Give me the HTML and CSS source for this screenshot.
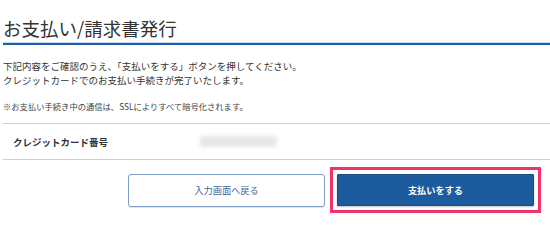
FILE: index.html
```html
<!DOCTYPE html>
<html lang="ja">
<head>
<meta charset="utf-8">
<title>お支払い/請求書発行</title>
<link rel="stylesheet" href="styles.css">
</head>
<body>
<div class="page">
  <h1 class="title">お支払い/請求書発行</h1>
  <p class="intro">下記内容をご確認のうえ、「支払いをする」ボタンを押してください。<br>クレジットカードでのお支払い手続きが完了いたします。</p>
  <p class="note">※お支払い手続き中の通信は、SSLによりすべて暗号化されます。</p>
  <div class="row">
    <div class="label">クレジットカード番号</div>
    <div class="value"><span class="blur"></span></div>
  </div>
  <div class="actions">
    <button class="btn btn-back" type="button">入力画面へ戻る</button>
    <div class="highlight">
      <button class="btn btn-pay" type="button">支払いをする</button>
    </div>
  </div>
</div>
</body>
</html>
```

FILE: styles.css
```css
html, body {
  margin: 0;
  padding: 0;
  background: #ffffff;
}

body {
  font-family: "Noto Sans CJK JP", "Noto Sans", sans-serif;
  color: #333333;
}

.page {
  margin-left: 3px;
  width: 547px;
}

.title {
  margin: 0;
  padding: 16px 0 3px 0;
  font-size: 18.5px;
  line-height: 24px;
  font-weight: 400;
  color: #333333;
  border-bottom: 2px solid #1f5ea3;
  box-shadow: 0 -1px 0 #c9d8ea inset;
}

.intro {
  margin: 14px 0 0 0;
  font-size: 9.5px;
  line-height: 14px;
  color: #333333;
}

.note {
  margin: 13px 0 0 0;
  font-size: 8.3px;
  line-height: 12px;
  color: #444444;
}

.row {
  margin-top: 11px;
  display: grid;
  grid-template-columns: 197px 1fr;
  align-items: center;
  height: 35px;
  border-top: 1px solid #c6d4e6;
  border-bottom: 1px solid #c6d4e6;
}

.label {
  padding-left: 10px;
  font-size: 9.5px;
  font-weight: 700;
  color: #333333;
}

.value {
  display: flex;
  align-items: center;
}

.blur {
  display: block;
  width: 77px;
  height: 11px;
  background: #e6e6e6;
  border-radius: 3px;
  filter: blur(2px);
}

.actions {
  margin-top: 7px;
  display: flex;
  justify-content: flex-end;
  align-items: center;
  gap: 5px;
  padding-right: 9px;
}

.btn {
  font-family: "Noto Sans CJK JP", "Noto Sans", sans-serif;
  font-size: 9.2px;
  cursor: pointer;
  padding: 0;
}

.btn-back {
  width: 197px;
  height: 33px;
  background: #ffffff;
  color: #3a68a3;
  border: 1.5px solid #7f9ec6;
  border-radius: 3px;
  box-shadow: 0 1px 1px rgba(0, 0, 0, 0.12);
}

.highlight {
  border: 3px solid #f0346b;
  padding: 4px;
}

.btn-pay {
  display: block;
  width: 197px;
  height: 32px;
  background: #1c5b9e;
  color: #ffffff;
  font-weight: 700;
  border: 1px solid #174f8c;
  border-radius: 1px;
  box-shadow: 0 1px 2px rgba(0, 0, 0, 0.25);
}
```
